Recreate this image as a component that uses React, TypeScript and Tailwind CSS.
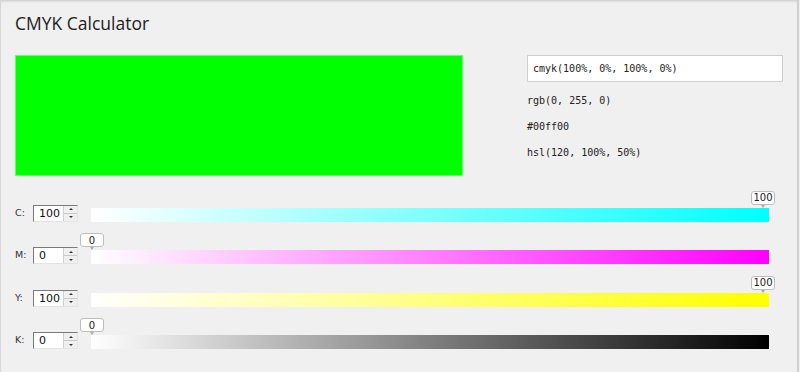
import React from "react";

type Row = { label: string; value: number; to: string };

const rows: Row[] = [
  { label: "C:", value: 100, to: "#00ffff" },
  { label: "M:", value: 0, to: "#ff00ff" },
  { label: "Y:", value: 100, to: "#ffff00" },
  { label: "K:", value: 0, to: "#000000" },
];

function Spinner({ value }: { value: number }) {
  return (
    <div className="flex h-[17px] w-[45px] border-t border-l border-t-[#7a7a7a] border-l-[#7a7a7a] border-b border-r border-b-[#e3e3e3] border-r-[#e3e3e3] bg-white">
      <div
        className="flex-1 pl-[5px] text-[11px] leading-[15px] text-[#111]"
        style={{ fontFamily: "'DejaVu Sans', sans-serif" }}
      >
        {value}
      </div>
      <div className="flex w-[14px] flex-col border-l border-[#d0d0d0] bg-[#f0f0f0]">
        <div className="flex flex-1 items-center justify-center border-b border-[#c8c8c8]">
          <div className="h-0 w-0 border-x-[2px] border-b-[2px] border-x-transparent border-b-[#333]" />
        </div>
        <div className="flex flex-1 items-center justify-center">
          <div className="h-0 w-0 border-x-[2px] border-t-[2px] border-x-transparent border-t-[#333]" />
        </div>
      </div>
    </div>
  );
}

function SliderRow({ row }: { row: Row }) {
  const left = 1 + (row.value / 100) * 671;
  return (
    <div className="flex h-[42.5px] items-end pb-[1px]">
      <div className="flex items-center">
        <div
          className="w-[18px] text-[9.5px] text-[#333]"
          style={{ fontFamily: "'DejaVu Sans', sans-serif" }}
        >
          {row.label}
        </div>
        <Spinner value={row.value} />
        <div className="relative ml-[13px] mt-[3px] h-[14px] w-[678px]">
          <div
            className="h-full w-full"
            style={{ background: `linear-gradient(to right, #ffffff, ${row.to})` }}
          />
          <div
            className="absolute bottom-[17px] flex flex-col items-center"
            style={{ left: left - 12 }}
          >
            <div
              className="flex h-[14px] w-[24px] items-center justify-center rounded-[3px] border border-[#bdbdbd] bg-white text-[10px] text-[#222]"
              style={{ fontFamily: "'DejaVu Sans', sans-serif" }}
            >
              {row.value}
            </div>
            <div className="absolute -bottom-[3px] h-0 w-0 border-x-[2px] border-t-[3px] border-x-transparent border-t-[#aaa]" />
          </div>
        </div>
      </div>
    </div>
  );
}

export default function App() {
  const mono = { fontFamily: "'DejaVu Sans Mono', 'Liberation Mono', monospace" };
  return (
    <div className="h-[372px] w-[800px] bg-[#f0f0f0]">
      <div className="h-[372px] w-[799px] border-l border-r-2 border-l-[#d6d6d6] border-r-[#d0d0d0] pl-[14px] shadow-[inset_0_3px_3px_-2px_rgba(0,0,0,0.18)]">
        <div
          className="pt-[11px] text-[17.5px] leading-[24px] text-[#222]"
          style={{ fontFamily: "'Open Sans', 'Noto Sans', sans-serif" }}
        >
          CMYK Calculator
        </div>
        <div className="mt-[20px] flex">
          <div className="h-[121px] w-[448px] border border-[#66ff66] bg-[#00ff00]" />
          <div className="ml-[64px] w-[256px]">
            <div
              className="flex h-[27px] items-center border border-[#cfcfcf] bg-white pl-[5px] text-[10px] text-[#222]"
              style={mono}
            >
              cmyk(100%, 0%, 100%, 0%)
            </div>
            <div className="mt-[6px] text-[10px] leading-[26px] text-[#222]" style={mono}>
              <div>rgb(0, 255, 0)</div>
              <div>#00ff00</div>
              <div>hsl(120, 100%, 50%)</div>
            </div>
          </div>
        </div>
        <div className="mt-[4px]">
          {rows.map((r) => (
            <SliderRow key={r.label} row={r} />
          ))}
        </div>
      </div>
    </div>
  );
}
